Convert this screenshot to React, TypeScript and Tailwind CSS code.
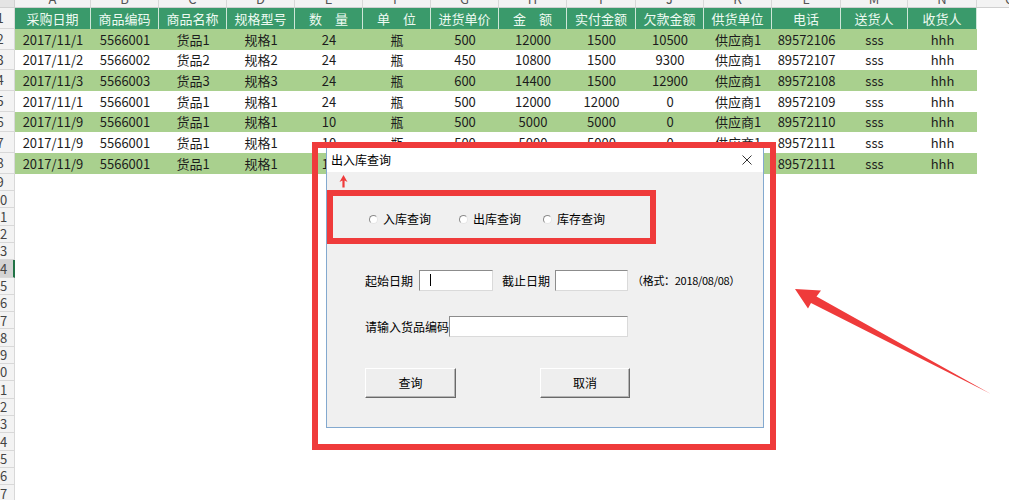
const cols = [
  { letter: "A", w: "w-[76px]", head: "采购日期" },
  { letter: "B", w: "w-[68px]", head: "商品编码" },
  { letter: "C", w: "w-[68px]", head: "商品名称" },
  { letter: "D", w: "w-[68px]", head: "规格型号" },
  { letter: "E", w: "w-[68px]", head: "数　量" },
  { letter: "F", w: "w-[68px]", head: "单　位" },
  { letter: "G", w: "w-[68px]", head: "进货单价" },
  { letter: "H", w: "w-[68px]", head: "金　额" },
  { letter: "I", w: "w-[69px]", head: "实付金额" },
  { letter: "J", w: "w-[68px]", head: "欠款金额" },
  { letter: "K", w: "w-[68px]", head: "供货单位" },
  { letter: "L", w: "w-[69px]", head: "电话" },
  { letter: "M", w: "w-[67px]", head: "送货人" },
  { letter: "N", w: "w-[69px]", head: "收货人" },
];

const rows = [
  ["2017/11/1", "5566001", "货品1", "规格1", "24", "瓶", "500", "12000", "1500", "10500", "供应商1", "89572106", "sss", "hhh"],
  ["2017/11/2", "5566002", "货品2", "规格2", "24", "瓶", "450", "10800", "1500", "9300", "供应商1", "89572107", "sss", "hhh"],
  ["2017/11/3", "5566003", "货品3", "规格3", "24", "瓶", "600", "14400", "1500", "12900", "供应商1", "89572108", "sss", "hhh"],
  ["2017/11/1", "5566001", "货品1", "规格1", "24", "瓶", "500", "12000", "12000", "0", "供应商1", "89572109", "sss", "hhh"],
  ["2017/11/9", "5566001", "货品1", "规格1", "10", "瓶", "500", "5000", "5000", "0", "供应商1", "89572110", "sss", "hhh"],
  ["2017/11/9", "5566001", "货品1", "规格1", "10", "瓶", "500", "5000", "5000", "0", "供应商1", "89572111", "sss", "hhh"],
  ["2017/11/9", "5566001", "货品1", "规格1", "10", "瓶", "500", "5000", "5000", "0", "供应商1", "89572111", "sss", "hhh"],
];

const font = { fontFamily: '"Noto Sans CJK SC", "Noto Sans", sans-serif' };

function RowNum({ n, active }: { n: number; active?: boolean }) {
  return (
    <div
      className={
        "w-[15px] shrink-0 overflow-hidden border-b border-r border-[#d8d8d8] text-[13px] text-[#444] " +
        (active ? "bg-[#d3d3d3] border-r-2 border-r-[#217346]" : "bg-[#f3f3f3]")
      }
    >
      <div className="-ml-[15px] flex h-full w-[30px] items-center justify-center">{n}</div>
    </div>
  );
}

function Sheet() {
  const empty = Array.from({ length: 19 }, (_, i) => i + 9);
  return (
    <div className="flex flex-col" style={font}>
      {/* column letters, scrolled so only the bottom shows */}
      <div className="flex h-[8px] overflow-hidden border-b border-[#d0d0d0] bg-[#f3f3f3]">
        <div className="w-[15px] shrink-0 border-r border-[#d0d0d0] bg-[#e4e4e4]" />
        {cols.map((c) => (
          <div key={c.letter} className={c.w + " shrink-0 border-r border-[#d8d8d8] text-center text-[13px] text-[#555]"}>
            <span className="-mt-[9px] block leading-[16px]">{c.letter}</span>
          </div>
        ))}
        <div className="flex-1 text-left text-[13px] text-[#555]">
          <span className="-mt-[9px] ml-[28px] block leading-[16px]">O</span>
        </div>
      </div>

      {/* header */}
      <div className="flex h-[21px]">
        <RowNum n={1} />
        {cols.map((c) => (
          <div
            key={c.letter}
            className={c.w + " flex shrink-0 items-center justify-center border-r border-[#cfe7d9] bg-[#3a9a6b] text-[13px] text-[#eefaf2]"}
          >
            {c.head}
          </div>
        ))}
      </div>

      {rows.map((r, i) => (
        <div key={i} className="flex h-[20.7px]">
          <RowNum n={i + 2} />
          {r.map((v, j) => (
            <div
              key={j}
              className={
                cols[j].w +
                " flex shrink-0 items-center justify-center overflow-hidden whitespace-nowrap text-[13px] text-[#1c1c1c] " +
                (i % 2 === 0 ? "bg-[#a9d08e]" : "bg-white")
              }
            >
              {v}
            </div>
          ))}
        </div>
      ))}

      {empty.map((n) => (
        <div key={n} className="flex h-[17.3px]">
          <RowNum n={n} active={n === 14} />
        </div>
      ))}
    </div>
  );
}

function Radio({ label, w }: { label: string; w: string }) {
  return (
    <div className={w + " flex items-center"}>
      <span className="h-[9px] w-[9px] rounded-full border border-[#8a8a8a] border-b-[#e6e6e6] border-r-[#e6e6e6] bg-white" />
      <span className="ml-[5px] text-[12px] leading-none">{label}</span>
    </div>
  );
}

function Field({ w, caret }: { w: string; caret?: boolean }) {
  return (
    <div className={w + " relative h-[21px] shrink-0 border border-[#dadada] border-l-[#8c8c8c] border-t-[#8c8c8c] bg-white"}>
      {caret && <span className="absolute left-[10px] top-[3px] h-[12px] w-px bg-black" />}
    </div>
  );
}

function Btn({ label, w }: { label: string; w: string }) {
  return (
    <button
      className={
        w +
        " h-[30px] border border-white border-b-[#696969] border-r-[#696969] bg-[#eeeeee] text-[12px] shadow-[inset_-1px_-1px_0_#b5b5b5]"
      }
    >
      {label}
    </button>
  );
}

function Dialog() {
  return (
    <div
      className="absolute left-[326px] top-[148px] flex h-[280px] w-[438px] flex-col border-x border-b border-[#83a9cf] bg-[#f0f0f0] text-black"
      style={font}
    >
      <div className="flex h-[24px] items-center justify-between bg-white pl-[4px] pr-[11px]">
        <span className="text-[12px]">出入库查询</span>
        <svg width="10" height="10" viewBox="0 0 10 10">
          <path d="M0.5 0.5 L9.5 9.5 M9.5 0.5 L0.5 9.5" stroke="#333" strokeWidth="1" />
        </svg>
      </div>

      <div className="mt-[39px] flex h-[16px] pl-[42px]">
        <Radio label="入库查询" w="w-[90px]" />
        <Radio label="出库查询" w="w-[84px]" />
        <Radio label="库存查询" w="w-[80px]" />
      </div>

      <div className="mt-[43px] flex h-[21px] items-center pl-[38px] text-[12px]">
        <span className="w-[46px] whitespace-nowrap">起始日期</span>
        <div className="ml-[8px]">
          <Field w="w-[74px]" caret />
        </div>
        <span className="ml-[9px] w-[46px] whitespace-nowrap">截止日期</span>
        <div className="ml-[7px]">
          <Field w="w-[73px]" />
        </div>
        <span className="ml-[4px] whitespace-nowrap text-[11px] tracking-[-0.3px]">（格式：2018/08/08）</span>
      </div>

      <div className="mt-[25px] flex h-[21px] items-center pl-[38px] text-[12px]">
        <span className="w-[84px] whitespace-nowrap">请输入货品编码</span>
        <Field w="w-[179px]" />
      </div>

      <div className="mt-[31px] flex pl-[38px]">
        <Btn label="查询" w="w-[91px]" />
        <div className="ml-[84px]">
          <Btn label="取消" w="w-[90px]" />
        </div>
      </div>
    </div>
  );
}

function Marks() {
  return (
    <>
      <div className="pointer-events-none absolute left-[312px] top-[142px] h-[308px] w-[464px] border-[6px] border-[#ef3b3b]" />
      <div className="pointer-events-none absolute left-[327px] top-[190px] h-[54px] w-[329px] border-[6px] border-[#ef3b3b]" />
      <svg className="pointer-events-none absolute left-0 top-0" width="1009" height="500" viewBox="0 0 1009 500">
        <polygon
          points="343.5,175 347.5,182 344.6,180.5 344.6,187.5 342.4,187.5 342.4,180.5 339.5,182"
          fill="#ef3b3b"
        />
        <polygon
          points="795,289 821,290.5 816.5,296.5 991,394 811,303 808,308.5"
          fill="#ef3b3b"
        />
      </svg>
    </>
  );
}

export default function App() {
  return (
    <div className="relative h-[500px] w-[1009px] overflow-hidden bg-white">
      <Sheet />
      <Dialog />
      <Marks />
    </div>
  );
}
